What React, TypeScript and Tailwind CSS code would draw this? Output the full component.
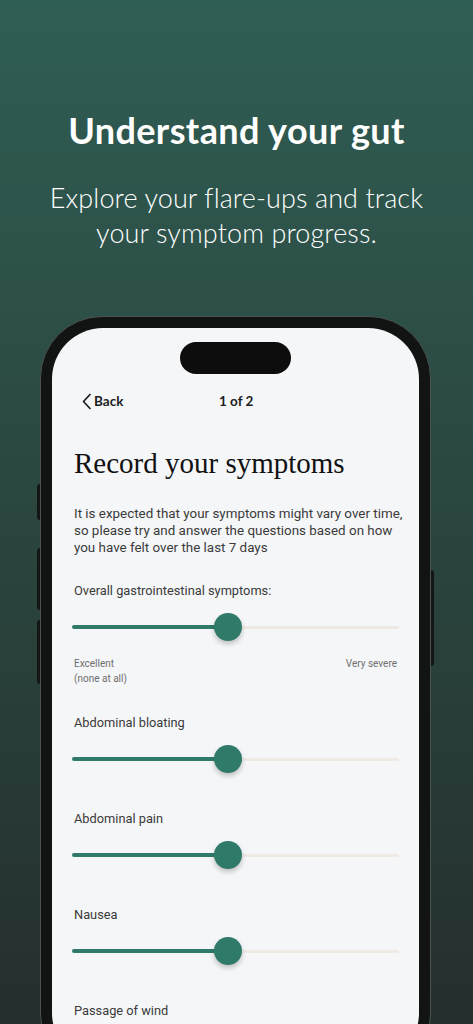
import React from 'react';

interface SliderProps {
  fill: number;
}

function Slider({ fill }: SliderProps) {
  return (
    <div className="relative h-[28px] mx-[20px] flex items-center">
      <div className="h-[4px] bg-[#2f7a69] rounded-full" style={{ width: fill }} />
      <div className="h-[3px] flex-1 bg-[#efe9e4] rounded-full" />
      <div
        className="absolute top-0 w-[28px] h-[28px] rounded-full bg-[#2f7a69] shadow-[0_3px_5px_rgba(0,0,0,0.22)]"
        style={{ left: fill - 14 }}
      />
    </div>
  );
}

const sintomas = ['Abdominal pain', 'Nausea'];

export default function App() {
  return (
    <div className="relative h-[1024px] w-full overflow-hidden bg-gradient-to-b from-[#2f5e54] via-[#2a463f] to-[#252f2d]">
      {/* Cabeçalho */}
      <div className="pt-[110px] text-center text-white" style={{ fontFamily: 'Lato, "Noto Sans", sans-serif' }}>
        <h1 className="text-[36px] leading-[40px] font-bold tracking-[0.4px]">Understand your gut</h1>
        <p className="mt-[30px] text-[27px] leading-[35px] font-light tracking-[0.1px]">
          Explore your flare-ups and track
          <br />
          your symptom progress.
        </p>
      </div>

      {/* Telefone */}
      <div className="relative mt-[66px] ml-[40px] w-[391px]">
        {/* botões laterais */}
        <div className="absolute left-[-3px] top-[168px] w-[3px] h-[36px] bg-[#141616] rounded-l-sm" />
        <div className="absolute left-[-3px] top-[232px] w-[3px] h-[62px] bg-[#141616] rounded-l-sm" />
        <div className="absolute left-[-3px] top-[304px] w-[3px] h-[64px] bg-[#141616] rounded-l-sm" />
        <div className="absolute right-[-3px] top-[254px] w-[3px] h-[96px] bg-[#141616] rounded-r-sm" />

        <div className="h-[760px] rounded-[62px] bg-[#121313] border border-[#4a5350] p-[11px]">
          <div className="h-full rounded-[51px] bg-[#f5f6f8] overflow-hidden">
            {/* ilha dinâmica */}
            <div className="mx-auto mt-[14px] w-[111px] h-[32px] rounded-full bg-[#0d0d0d]" />

            {/* navegação */}
            <div
              className="relative mt-[17px] h-[20px] flex items-center text-[13.5px] font-bold text-[#1c1c1c]"
              style={{ fontFamily: 'Lato, "Noto Sans", sans-serif' }}
            >
              <div className="ml-[29px] flex items-center gap-[2px]">
                <svg width="11" height="17" viewBox="0 0 11 17" fill="none">
                  <path d="M9 1.5 L2.5 8.5 L9 15.5" stroke="#1c1c1c" strokeWidth="1.7" strokeLinecap="round" strokeLinejoin="round" />
                </svg>
                <span>Back</span>
              </div>
              <span className="absolute left-[167px]">1 of 2</span>
            </div>

            {/* conteúdo */}
            <div className="mt-[34px]" style={{ fontFamily: 'Roboto, "Noto Sans", sans-serif' }}>
              <h2
                className="ml-[22px] text-[29px] leading-[36px] text-[#111]"
                style={{ fontFamily: '"Liberation Serif", "DejaVu Serif", serif' }}
              >
                Record your symptoms
              </h2>
              <p className="mt-[24px] ml-[22px] mr-[4px] text-[13.4px] leading-[17px] text-[#3b3b3b]">
                It is expected that your symptoms might vary over time, so please try and answer the questions based on how you have felt over the last 7 days
              </p>

              <p className="mt-[26px] ml-[22px] text-[12.8px] leading-[17px] text-[#3b3b3b]">
                Overall gastrointestinal symptoms:
              </p>
              <div className="mt-[14px]">
                <Slider fill={156} />
              </div>
              <div className="mt-[16px] mx-[22px] flex justify-between text-[10px] leading-[14.5px] text-[#6f6f6f]">
                <div>
                  Excellent
                  <br />
                  (none at all)
                </div>
                <div>Very severe</div>
              </div>

              <div className="mt-[28px]">
                <p className="ml-[22px] text-[12.8px] leading-[17px] text-[#3b3b3b]">Abdominal bloating</p>
                <div className="mt-[14px]">
                  <Slider fill={156} />
                </div>
              </div>

              {sintomas.map(nome => (
                <div key={nome} className="mt-[37px]">
                  <p className="ml-[22px] text-[12.8px] leading-[17px] text-[#3b3b3b]">{nome}</p>
                  <div className="mt-[14px]">
                    <Slider fill={156} />
                  </div>
                </div>
              ))}

              <p className="mt-[37px] ml-[22px] text-[12.8px] leading-[17px] text-[#3b3b3b]">Passage of wind</p>
            </div>
          </div>
        </div>
      </div>
    </div>
  );
}
